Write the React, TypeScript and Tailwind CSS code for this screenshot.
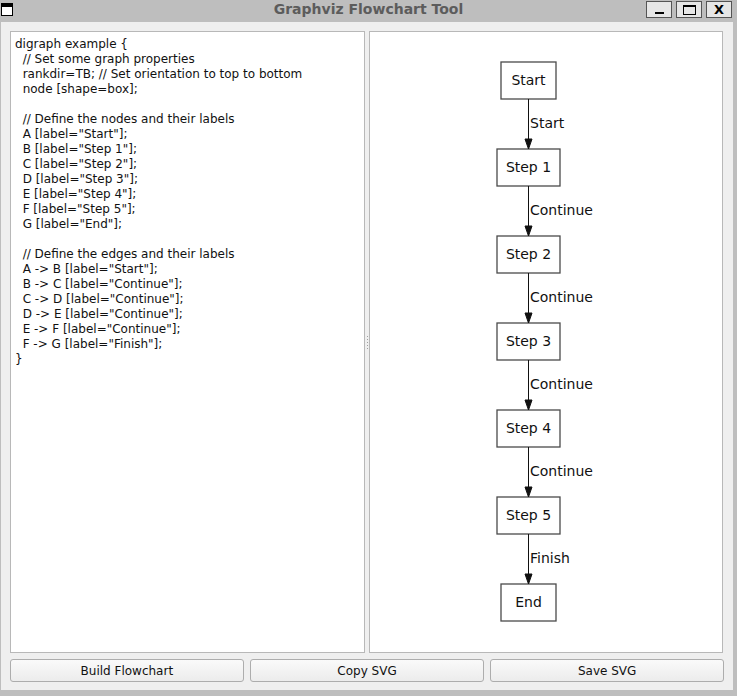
import React from 'react';

const code = `digraph example {
  // Set some graph properties
  rankdir=TB; // Set orientation to top to bottom
  node [shape=box];

  // Define the nodes and their labels
  A [label="Start"];
  B [label="Step 1"];
  C [label="Step 2"];
  D [label="Step 3"];
  E [label="Step 4"];
  F [label="Step 5"];
  G [label="End"];

  // Define the edges and their labels
  A -> B [label="Start"];
  B -> C [label="Continue"];
  C -> D [label="Continue"];
  D -> E [label="Continue"];
  E -> F [label="Continue"];
  F -> G [label="Finish"];
}`;

const nodes = ['Start', 'Step 1', 'Step 2', 'Step 3', 'Step 4', 'Step 5', 'End'];
const edges = ['Start', 'Continue', 'Continue', 'Continue', 'Continue', 'Finish'];

const Flowchart = () => {
  const cx = 158.5;
  const top = 30;
  const step = 87;
  const h = 37;
  return (
    <svg width="353" height="620" className="block" style={{ fontFamily: '"DejaVu Sans", sans-serif' }}>
      {nodes.map((n, i) => {
        const w = n.startsWith('Step') ? 63 : 55;
        const y = top + i * step;
        return (
          <g key={i}>
            <rect x={cx - w / 2} y={y} width={w} height={h} fill="white" stroke="#4a4a4a" strokeWidth="1.3" />
            <text x={cx} y={y + 23} textAnchor="middle" fontSize="14" fill="#111">{n}</text>
          </g>
        );
      })}
      {edges.map((e, i) => {
        const y1 = top + i * step + h;
        const y2 = top + (i + 1) * step;
        return (
          <g key={i}>
            <line x1={cx} y1={y1} x2={cx} y2={y2 - 10} stroke="#111" strokeWidth="1" />
            <polygon points={`${cx - 3.5},${y2 - 10} ${cx + 3.5},${y2 - 10} ${cx},${y2}`} fill="#111" stroke="#111" strokeWidth="1" />
            <text x={cx + 1.5} y={(y1 + y2) / 2 + 4} fontSize="14" fill="#111">{e}</text>
          </g>
        );
      })}
    </svg>
  );
};

const Btn = ({ label }: { label: string }) => (
  <button className="flex-1 h-[23px] rounded-[3px] border border-[#adadad] bg-gradient-to-b from-[#fafafa] to-[#ececec] text-[12px] text-[#111] leading-none">
    {label}
  </button>
);

export default function App() {
  return (
    <div className="w-[737px] h-[696px] bg-[#bebebe] flex flex-col" style={{ fontFamily: '"DejaVu Sans", sans-serif' }}>
      {/* title bar */}
      <div className="h-[22px] relative flex items-center justify-center shrink-0">
        <div className="absolute left-[1px] top-[3px] w-[12px] h-[13px] border border-black bg-white">
          <div className="h-[3px] bg-black" />
        </div>
        <span className="font-bold text-[14px] text-[#5c5c5c] -mt-[4px]">Graphviz Flowchart Tool</span>
        <div className="absolute right-[5px] top-[1px] flex gap-[4px]">
          <div className="w-[26px] h-[17px] border border-[#555] bg-[#e6e6e6] flex items-end justify-center pb-[3px]">
            <div className="w-[9px] h-[2px] bg-black" />
          </div>
          <div className="w-[26px] h-[17px] border border-[#555] bg-[#e6e6e6] flex items-center justify-center">
            <div className="w-[13px] h-[10px] border border-black border-t-2" />
          </div>
          <div className="w-[26px] h-[17px] border border-[#555] bg-[#e6e6e6] flex items-center justify-center text-[13px] font-bold leading-none">
            X
          </div>
        </div>
      </div>
      {/* content */}
      <div className="flex-1 ml-[1px] mr-[4px] mb-[6px] bg-[#efefef] px-[9px] pt-[9px] pb-[8px] flex flex-col gap-[6px]">
        <div className="flex-1 flex min-h-0">
          <div className="w-[355px] border border-[#b8b8b8] bg-white px-[4px] pt-[5px]">
            <pre className="text-[12px] leading-[15px] text-[#111] whitespace-pre" style={{ fontFamily: '"DejaVu Sans", sans-serif' }}>{code}</pre>
          </div>
          <div className="w-[4px] flex flex-col items-center justify-center gap-[2px]">
            {[0, 1, 2, 3, 4].map((i) => (
              <div key={i} className="w-[1px] h-[1px] bg-[#a0a0a0]" />
            ))}
          </div>
          <div className="w-[354px] border border-[#b8b8b8] bg-white">
            <Flowchart />
          </div>
        </div>
        <div className="flex gap-[6.5px]">
          <Btn label="Build Flowchart" />
          <Btn label="Copy SVG" />
          <Btn label="Save SVG" />
        </div>
      </div>
    </div>
  );
}
